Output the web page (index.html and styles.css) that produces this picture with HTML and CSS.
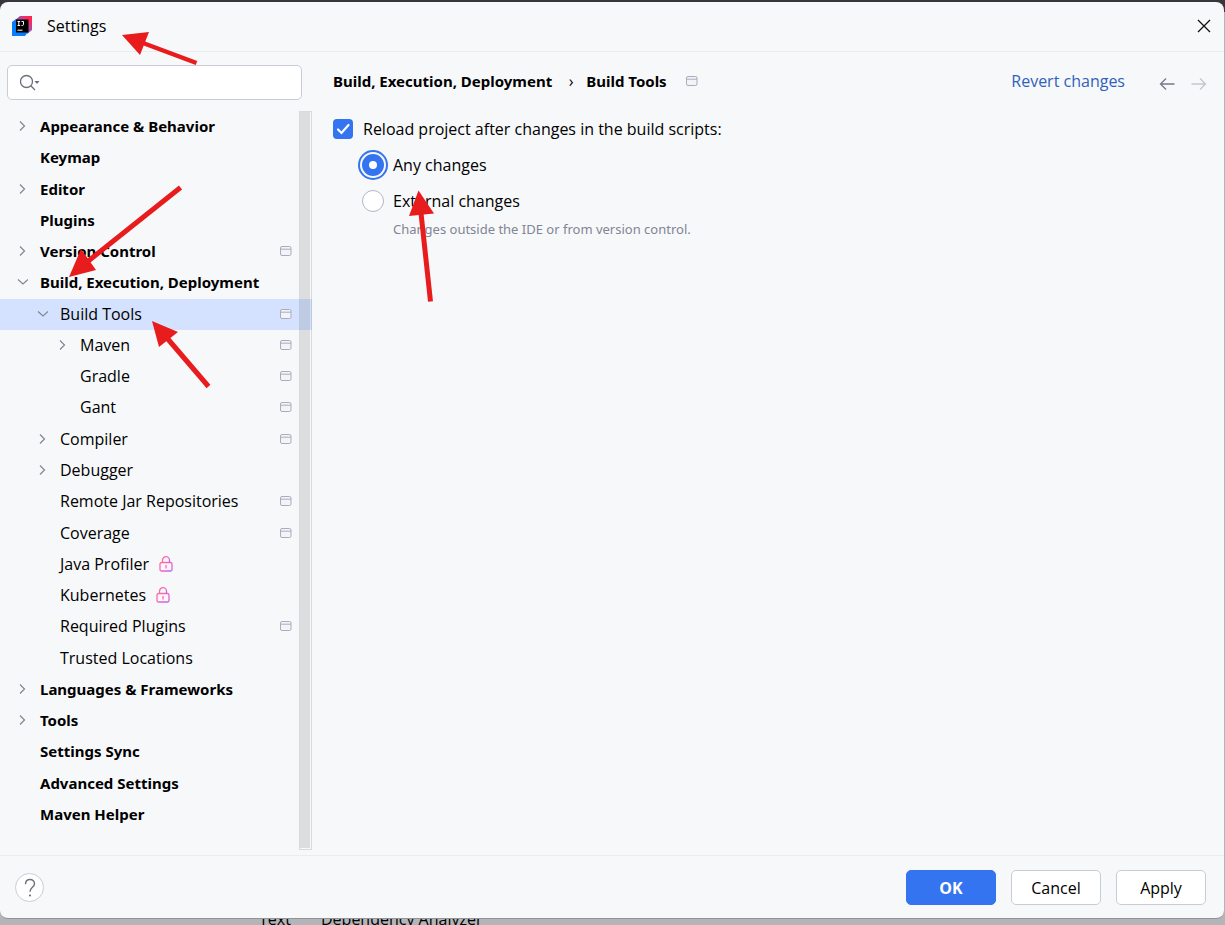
FILE: index.html
```
<!DOCTYPE html>
<html lang="en">
<head>
    <meta charset="UTF-8">
    <meta name="viewport" content="width=device-width, initial-scale=1.0">
    <title>Settings</title>
    <link rel="stylesheet" href="styles.css">
</head>
<body>
    <svg class="sprite" width="0" height="0" aria-hidden="true">
        <defs>
            <linearGradient id="lockColor" x1="0" y1="0" x2="1" y2="1">
                <stop offset="0" stop-color="#ff6f86"/>
                <stop offset="0.5" stop-color="#f567c8"/>
                <stop offset="1" stop-color="#b961f5"/>
            </linearGradient>
            <linearGradient id="logoPink" x1="0" y1="1" x2="1" y2="0">
                <stop offset="0.2" stop-color="#3b6fe8"/>
                <stop offset="0.55" stop-color="#9a4fb0"/>
                <stop offset="0.8" stop-color="#fe2857"/>
            </linearGradient>
        </defs>
        <symbol id="right" viewBox="0 0 12 12"><path d="M4 1.500l4.500 4.500L4 10.500" fill="none" stroke="#818594" stroke-width="1.2"/></symbol>
        <symbol id="down" viewBox="0 0 12 12"><path d="M2 3.500l5 4.500 5-4.500" fill="none" stroke="#818594" stroke-width="1.2"/></symbol>
        <symbol id="project" viewBox="0 0 12 12"><rect x=".5" y="1.500" width="10.500" height="9" rx="1.500" fill="#f3f4f8" stroke="#a8adbd"/><path d="M1 4.200h10" stroke="#a8adbd"/></symbol>
        <symbol id="lock" viewBox="0 0 14 16"><rect x="1" y="6.500" width="12" height="8.500" rx="1.500" fill="#fff5fc" stroke="url(#lockColor)" stroke-width="1.3"/><path d="M3.500 6.500V4.200a3.500 3.500 0 0 1 7 0v2.300" fill="none" stroke="url(#lockColor)" stroke-width="1.3"/><path d="M7 9v3.500" stroke="#f76bb0" stroke-width="1.300"/></symbol>
    </svg>

    <main class="dialog">
        <header class="titlebar">
            <svg class="logo" width="20" height="20" viewBox="0 0 20 20" aria-hidden="true">
                <path d="M0 6l4-3h12v13l-3 4H0z" fill="#087cfa"/>
                <path d="M2.500 4.500L8 0h12v14l-5 4V4z" fill="url(#logoPink)"/>
                <rect x="4" y="3.500" width="12.500" height="13" fill="#000"/>
                <path d="M5.500 5.500h2.600M6.800 5.500v4M5.500 9.500h2.600M9.500 5.500h2v2.800q0 1.200-1.200 1.200h-.8M5.500 14.200h5" fill="none" stroke="#fff"/>
            </svg>
            <h1>Settings</h1>
            <button class="icon-btn close" aria-label="Close">
                <svg width="14" height="14" viewBox="0 0 14 14"><path d="M1 1l12 12M13 1L1 13" stroke="#111" stroke-width="1.300"/></svg>
            </button>
        </header>

        <div class="main">
            <aside class="sidebar">
                <div class="search">
                    <svg width="22" height="18" viewBox="0 0 22 18" aria-hidden="true">
                        <circle cx="6.500" cy="7.500" r="6" fill="none" stroke="#6c707e" stroke-width="1.300"/>
                        <path d="M10.800 11.800l4.200 4.200" stroke="#6c707e" stroke-width="1.300"/>
                        <path d="M14.500 7h5l-2.500 3z" fill="#6c707e"/>
                    </svg>
                    <input type="text" aria-label="Search settings">
                </div>
                <div class="tree-box">
                    <ul class="tree">
                        <li class="group"><svg class="arrow"><use href="#right"/></svg>Appearance &amp; Behavior</li>
                        <li class="group"><span class="arrow"></span>Keymap</li>
                        <li class="group"><svg class="arrow"><use href="#right"/></svg>Editor</li>
                        <li class="group"><span class="arrow"></span>Plugins</li>
                        <li class="group"><svg class="arrow"><use href="#right"/></svg>Version Control<svg class="project"><use href="#project"/></svg></li>
                        <li class="group"><svg class="arrow"><use href="#down"/></svg>Build, Execution, Deployment</li>
                        <li class="level-2 selected"><svg class="arrow"><use href="#down"/></svg>Build Tools<svg class="project"><use href="#project"/></svg></li>
                        <li class="level-3"><svg class="arrow"><use href="#right"/></svg>Maven<svg class="project"><use href="#project"/></svg></li>
                        <li class="level-3"><span class="arrow"></span>Gradle<svg class="project"><use href="#project"/></svg></li>
                        <li class="level-3"><span class="arrow"></span>Gant<svg class="project"><use href="#project"/></svg></li>
                        <li class="level-2"><svg class="arrow"><use href="#right"/></svg>Compiler<svg class="project"><use href="#project"/></svg></li>
                        <li class="level-2"><svg class="arrow"><use href="#right"/></svg>Debugger</li>
                        <li class="level-2"><span class="arrow"></span>Remote Jar Repositories<svg class="project"><use href="#project"/></svg></li>
                        <li class="level-2"><span class="arrow"></span>Coverage<svg class="project"><use href="#project"/></svg></li>
                        <li class="level-2"><span class="arrow"></span>Java Profiler<svg class="lock"><use href="#lock"/></svg></li>
                        <li class="level-2"><span class="arrow"></span>Kubernetes<svg class="lock"><use href="#lock"/></svg></li>
                        <li class="level-2"><span class="arrow"></span>Required Plugins<svg class="project"><use href="#project"/></svg></li>
                        <li class="level-2"><span class="arrow"></span>Trusted Locations</li>
                        <li class="group"><svg class="arrow"><use href="#right"/></svg>Languages &amp; Frameworks</li>
                        <li class="group"><svg class="arrow"><use href="#right"/></svg>Tools</li>
                        <li class="group"><span class="arrow"></span>Settings Sync</li>
                        <li class="group"><span class="arrow"></span>Advanced Settings</li>
                        <li class="group"><span class="arrow"></span>Maven Helper</li>
                    </ul>
                    <div class="scrollbar"></div>
                </div>
            </aside>

            <section class="content">
                <div class="page-header">
                    <h2>Build, Execution, Deployment</h2>
                    <span class="separator">›</span>
                    <h2>Build Tools</h2>
                    <svg class="page-icon"><use href="#project"/></svg>
                    <a class="revert" href="#">Revert changes</a>
                    <button class="icon-btn" aria-label="Back">
                        <svg width="16" height="14" viewBox="0 0 16 14"><path d="M15.500 7H1.500M7 1.500L1.500 7 7 12.500" fill="none" stroke="#767a8a" stroke-width="1.300"/></svg>
                    </button>
                    <button class="icon-btn" aria-label="Forward" disabled>
                        <svg width="16" height="14" viewBox="0 0 16 14"><path d="M.5 7h14M9 1.500L14.500 7 9 12.500" fill="none" stroke="#c4c6cc" stroke-width="1.300"/></svg>
                    </button>
                </div>
                <div class="option">
                    <input type="checkbox" id="reload" checked>
                    <label for="reload">Reload project after changes in the build scripts:</label>
                </div>
                <div class="option nested">
                    <input type="radio" name="changes" id="any" checked>
                    <label for="any">Any changes</label>
                </div>
                <div class="option nested">
                    <input type="radio" name="changes" id="external">
                    <label for="external">External changes</label>
                </div>
                <p class="hint">Changes outside the IDE or from version control.</p>
            </section>
        </div>

        <footer class="footer">
            <button class="help" aria-label="Help">
                <svg width="12" height="20" viewBox="0 0 12 20"><path d="M1.500 6.300C1.500 3.300 3.300 1.500 6 1.500s4.500 1.700 4.500 4.200c0 3.600-4.500 3.800-4.500 8" fill="none" stroke="#6c707e" stroke-width="1.400"/><circle cx="6" cy="17.500" r="1.100" fill="#6c707e"/></svg>
            </button>
            <button class="btn primary">OK</button>
            <button class="btn">Cancel</button>
            <button class="btn">Apply</button>
        </footer>
    </main>

    <div class="behind">
        <span class="tab">Text</span>
        <span>Dependency Analyzer</span>
    </div>

    <!-- red pointer arrows -->
    <svg class="pointers" width="440" height="400" viewBox="0 0 440 400" aria-hidden="true">
        <g fill="#e81c1c" stroke="#e81c1c">
            <path d="M122 35l27-3-9 23z" stroke="none"/>
            <path d="M143 43l53.500 20" stroke-width="4.500"/>
            <path d="M69 277l12-28 15 21z" stroke="none"/>
            <path d="M87 262l93.500-74.500" stroke-width="5"/>
            <path d="M152 321l26 11-19 15z" stroke="none"/>
            <path d="M167 338l41.500 48.500" stroke-width="5"/>
            <path d="M418.500 190.500l15.500 23-25 2.500z" stroke="none"/>
            <path d="M421 213l9.500 88.500" stroke-width="5"/>
        </g>
    </svg>
</body>
</html>
```
FILE: styles.css
```
* {
    box-sizing: border-box;
}
body {
    margin: 0;
    height: 100vh;
    display: flex;
    flex-direction: column;
    background: linear-gradient(#38363c 12px, #b4b5b8 12px);
    color: #000;
    font-family: "Open Sans", "Noto Sans", sans-serif;
    font-size: 16px;
    line-height: 20px;
}
button, input {
    font: inherit;
    color: inherit;
    margin: 0;
}
svg {
    flex-shrink: 0;
}
.sprite {
    position: absolute;
}
.dialog {
    flex: 1;
    min-height: 0;
    display: flex;
    flex-direction: column;
    margin: 2px 1px 0 0;
    background: #f7f8fa;
    border-radius: 8px;
    border-bottom: 1px solid #929396;
}
.titlebar {
    display: flex;
    align-items: center;
    height: 50px;
    padding: 0 13px 2px 12px;
    border-bottom: 1px solid #ebecf0;
}
h1 {
    margin: 0 0 0 15px;
    font-size: 16px;
    font-weight: normal;
}
.icon-btn {
    display: flex;
    padding: 0;
    background: none;
    border: none;
}
.close {
    margin-left: auto;
}

/* sidebar */
.main {
    flex: 1;
    min-height: 0;
    display: flex;
}
.sidebar {
    width: 312px;
    display: flex;
    flex-direction: column;
    padding: 13px 0 5px;
}
.search {
    display: flex;
    align-items: center;
    height: 35px;
    margin: 0 10px 11px 7px;
    padding: 0 12px;
    background: #fff;
    border: 1px solid #c9ccd6;
    border-radius: 5px;
}
.search input {
    flex: 1;
    min-width: 0;
    background: none;
    border: none;
    outline: none;
}
.tree-box {
    position: relative;
    flex: 1;
    min-height: 0;
}
.tree {
    display: grid;
    grid-auto-rows: 1fr;
    height: 100%;
    margin: 0;
    padding: 0 0 20px;
    list-style: none;
}
.tree li {
    display: flex;
    align-items: center;
    padding: 0 20px 1px 16px;
}
.tree .group {
    font-family: "Noto Sans", sans-serif;
    font-size: 15px;
    font-weight: bold;
}
.tree .level-2 {
    padding-left: 36px;
}
.tree .level-3 {
    padding-left: 56px;
}
.tree .selected {
    background: #d4e2ff;
}
.arrow {
    width: 12px;
    height: 12px;
    margin-right: 12px;
}
.project {
    width: 12px;
    height: 12px;
    margin-left: auto;
}
.lock {
    width: 14px;
    height: 16px;
    margin-left: 10px;
}
.scrollbar {
    position: absolute;
    top: 0;
    right: 0;
    bottom: 0;
    width: 13px;
    padding: 0 1px 1px 0;
    background: rgba(100, 100, 100, 0.18);
    background-clip: content-box;
    border: 1px solid rgba(100, 100, 100, 0.2);
}

/* right side */
.content {
    flex: 1;
    padding: 18px 17px 0 21px;
}
.page-header {
    display: flex;
    align-items: center;
    height: 22px;
    margin-bottom: 19px;
}
h2 {
    margin: 0;
    font-family: "Noto Sans", sans-serif;
    font-size: 15px;
}
.separator {
    width: 34px;
    padding-left: 4px;
    text-align: center;
}
.page-icon {
    width: 12px;
    height: 12px;
    margin-left: 19px;
}
.revert {
    margin-left: auto;
    margin-right: 18px;
    color: #315fbd;
    text-decoration: none;
}
.page-header .icon-btn {
    margin: 6px 0 0 16px;
}
.option {
    display: flex;
    align-items: center;
    height: 36px;
    gap: 10px;
}
.nested {
    margin-left: 29px;
    gap: 9px;
}
.option input {
    appearance: none;
    width: 20px;
    height: 20px;
}
.option input[type="checkbox"] {
    border-radius: 4px;
    background: #3574f0 url('data:image/svg+xml,<svg xmlns="http://www.w3.org/2000/svg" viewBox="0 0 20 20"><path d="M5 10.500l3.500 3.500L15.500 6" fill="none" stroke="white" stroke-width="2.200" stroke-linecap="round"/></svg>');
}
.option input[type="radio"] {
    width: 22px;
    height: 22px;
    border: 1px solid #b3b7c5;
    border-radius: 50%;
    background: #fff;
}
.option input[type="radio"]:checked {
    border: 7px solid #3574f0;
    box-shadow: 0 0 0 2px #f7f8fa, 0 0 0 4px #3574f0;
}
.hint {
    margin: 0 0 0 60px;
    color: #818594;
    font-family: "Noto Sans", sans-serif;
    font-size: 13px;
}

/* footer */
.footer {
    display: flex;
    align-items: center;
    height: 63px;
    padding: 1px 18px 0 15px;
    gap: 15px;
    border-top: 1px solid #ebecf0;
}
.help {
    display: flex;
    align-items: center;
    justify-content: center;
    width: 29px;
    height: 29px;
    margin-right: auto;
    padding: 0;
    background: #fff;
    border: 1px solid #c9ccd6;
    border-radius: 50%;
}
.btn {
    width: 90px;
    height: 35px;
    padding: 0;
    background: #fff;
    border: 1px solid #c9ccd6;
    border-radius: 5px;
}
.primary {
    background: #3574f0;
    border-color: #3574f0;
    color: #fff;
    font-weight: bold;
}

/* window behind the dialog */
.behind {
    display: flex;
    align-items: flex-end;
    height: 6px;
    padding-left: 259px;
    overflow: hidden;
    line-height: 12px;
}
.tab {
    width: 62px;
}
.pointers {
    position: absolute;
    top: 0;
    left: 0;
    pointer-events: none;
}
```
